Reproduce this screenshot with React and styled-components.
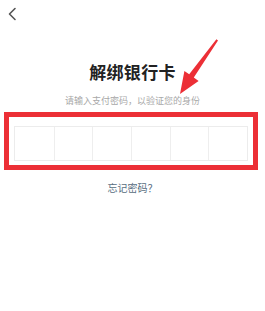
import React from 'react'
import styled, { createGlobalStyle } from 'styled-components'

const GlobalStyle = createGlobalStyle`
  html, body {
    margin: 0;
    padding: 0;
    background: #fff;
  }
`

const Page = styled.div`
  position: relative;
  width: 265px;
  height: 311px;
  overflow: hidden;
  background: #fff;
  font-family: "Noto Sans CJK SC", "Noto Sans", sans-serif;
  display: flex;
  flex-direction: column;
`

const TopBar = styled.div`
  height: 28px;
  padding: 7px 0 0 7px;
  box-sizing: border-box;
`

const BackBtn = styled.button`
  border: none;
  background: none;
  padding: 0;
  width: 12px;
  height: 14px;
  display: block;
`

const Title = styled.h1`
  margin: 33px 0 0;
  font-size: 17px;
  line-height: 22px;
  font-weight: 700;
  color: #222;
  text-align: center;
  letter-spacing: 0.3px;
`

const Hint = styled.p`
  margin: 12px 0 0;
  font-size: 9px;
  line-height: 12px;
  color: #a8a8a8;
  text-align: center;
`

const Highlight = styled.div`
  margin: 5px 7px 0 4px;
  border: 5px solid #ec2f36;
  padding: 9px 5px 4px;
`

const Cells = styled.div`
  display: grid;
  grid-template-columns: repeat(6, 1fr);
  border: 1px solid #ececec;
  height: 35px;
  box-sizing: border-box;
`

const Cell = styled.div`
  border-left: ${p => (p.$first ? 'none' : '1px solid #eeeeee')};
`

const Forgot = styled.a`
  margin-top: 11px;
  align-self: center;
  font-size: 10px;
  line-height: 14px;
  color: #576d80;
  text-decoration: none;
`

const Arrow = styled.svg`
  position: absolute;
  left: 0;
  top: 0;
  pointer-events: none;
`

export default function App() {
  return (
    <Page>
      <GlobalStyle />
      <TopBar>
        <BackBtn aria-label="back">
          <svg width="12" height="14" viewBox="0 0 12 14">
            <path d="M8 1.5 L2.5 7 L8 12.5" fill="none" stroke="#555" strokeWidth="1.6" strokeLinecap="round" strokeLinejoin="round" />
          </svg>
        </BackBtn>
      </TopBar>
      <Title>解绑银行卡</Title>
      <Hint>请输入支付密码，以验证您的身份</Hint>
      <Highlight>
        <Cells>
          {[0, 1, 2, 3, 4, 5].map(i => (
            <Cell key={i} $first={i === 0} />
          ))}
        </Cells>
      </Highlight>
      <Forgot href="#">忘记密码？</Forgot>
      <Arrow width="265" height="311" viewBox="0 0 265 311">
        <polygon
          points="180,94 184.4,71 189.2,74.3 216.4,39.2 218,40.4 193.8,77.6 198.6,81"
          fill="#ec2f36"
        />
      </Arrow>
    </Page>
  )
}
